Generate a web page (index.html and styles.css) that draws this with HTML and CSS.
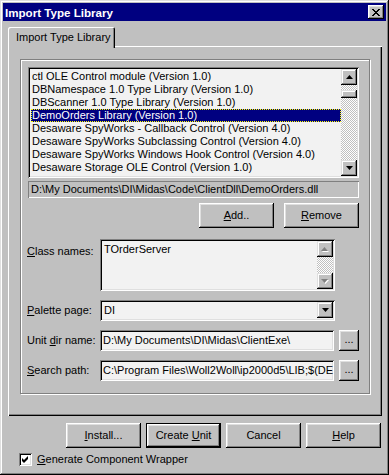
FILE: index.html
```html
<!DOCTYPE html>
<html lang="en">
<head>
    <meta charset="UTF-8">
    <title>Import Type Library</title>
    <link rel="stylesheet" href="styles.css">
</head>
<body>
    <div class="window">
        <div class="titlebar">
            <span class="title">Import Type Library</span>
            <div class="close-btn">
                <svg width="8" height="7" viewBox="0 0 8 7"><path d="M0 0h2v1h-2zM1 1h2v1h-2zM2 2h4v1h-4zM3 3h2v1h-2zM2 4h4v1h-4zM1 5h2v1h-2zM0 6h2v1h-2zM6 0h2v1h-2zM5 1h2v1h-2zM5 5h2v1h-2zM6 6h2v1h-2z" fill="#000"/></svg>
            </div>
        </div>

        <div class="tabstrip">
            <div class="tab">Import Type Library</div>
        </div>

        <div class="panel">
            <div class="group">
                <div class="listbox">
                    <div class="list-items">
                        <div class="item">ctl OLE Control module (Version 1.0)</div>
                        <div class="item">DBNamespace 1.0 Type Library (Version 1.0)</div>
                        <div class="item">DBScanner 1.0 Type Library (Version 1.0)</div>
                        <div class="item selected">DemoOrders Library (Version 1.0)</div>
                        <div class="item">Desaware SpyWorks - Callback Control (Version 4.0)</div>
                        <div class="item">Desaware SpyWorks Subclassing Control (Version 4.0)</div>
                        <div class="item">Desaware SpyWorks Windows Hook Control (Version 4.0)</div>
                        <div class="item">Desaware Storage OLE Control (Version 1.0)</div>
                        <div class="item">DCPOLE Dialogs Library (Version 1.0)</div>
                    </div>
                    <div class="vscroll">
                        <div class="sbtn"><svg width="7" height="4"><polygon points="3.5,0 7,4 0,4" fill="#000"/></svg></div>
                        <div class="track">
                            <div class="thumb"></div>
                        </div>
                        <div class="sbtn"><svg width="7" height="4"><polygon points="0,0 7,0 3.5,4" fill="#000"/></svg></div>
                    </div>
                </div>

                <div class="pathbox">D:\My Documents\DI\Midas\Code\ClientDll\DemoOrders.dll</div>

                <div class="btn-row">
                    <div class="button"><span><u>A</u>dd..</span></div>
                    <div class="button"><span><u>R</u>emove</span></div>
                </div>

                <div class="form">
                    <div class="label top"><span><u>C</u>lass names:</span></div>
                    <div class="memo">
                        <div class="memo-text">TOrderServer</div>
                        <div class="vscroll disabled">
                            <div class="sbtn"><svg width="8" height="5"><polygon points="4,1 8,5 1,5" fill="#fff"/><polygon points="3.5,0 7,4 0,4" fill="#808080"/></svg></div>
                            <div class="track"></div>
                            <div class="sbtn"><svg width="8" height="5"><polygon points="1,1 8,1 4.5,5" fill="#fff"/><polygon points="0,0 7,0 3.5,4" fill="#808080"/></svg></div>
                        </div>
                    </div>

                    <div class="label"><span><u>P</u>alette page:</span></div>
                    <div class="combo">
                        <div class="combo-text">DI</div>
                        <div class="sbtn"><svg width="7" height="4"><polygon points="0,0 7,0 3.5,4" fill="#000"/></svg></div>
                    </div>

                    <div class="label"><span>Unit <u>d</u>ir name:</span></div>
                    <div class="field-row">
                        <div class="edit">D:\My Documents\DI\Midas\ClientExe\</div>
                        <div class="button small">...</div>
                    </div>

                    <div class="label"><span><u>S</u>earch path:</span></div>
                    <div class="field-row">
                        <div class="edit">C:\Program Files\Woll2Woll\ip2000d5\LIB;$(DE</div>
                        <div class="button small">...</div>
                    </div>
                </div>
            </div>
        </div>

        <div class="footer">
            <div class="button"><span><u>I</u>nstall...</span></div>
            <div class="button default"><span>Create <u>U</u>nit</span></div>
            <div class="button"><span>Cancel</span></div>
            <div class="button"><span><u>H</u>elp</span></div>
        </div>

        <div class="check-row">
            <div class="checkbox">
                <svg width="7" height="7" viewBox="0 0 7 7"><path d="M6 0v3l-4 4-2-2v-3l2 2z" fill="#000"/></svg>
            </div>
            <span><u>G</u>enerate Component Wrapper</span>
        </div>
    </div>
</body>
</html>
```

FILE: styles.css
```css
* {
    box-sizing: border-box;
}
body {
    margin: 0;
    background: #c0c0c0;
    font-family: "Liberation Sans", Arial, sans-serif;
    font-size: 11px;
    line-height: 13px;
    color: #000;
}
u {
    text-decoration: underline;
    text-underline-offset: 1px;
}
.window {
    width: 389px;
    height: 475px;
    padding: 3px;
    background: #c0c0c0;
    box-shadow: inset -1px -1px #000, inset 1px 1px #dfdfdf, inset -2px -2px #808080, inset 2px 2px #fff;
    display: flex;
    flex-direction: column;
}
.titlebar {
    height: 18px;
    background: #000080;
    color: #fff;
    display: flex;
    align-items: center;
    justify-content: space-between;
    padding: 0 2px 0 2px;
}
.title {
    font-weight: bold;
    font-size: 11.6px;
}
.close-btn {
    width: 16px;
    height: 14px;
    background: #c0c0c0;
    display: flex;
    align-items: center;
    justify-content: center;
    padding-right: 1px;
    box-shadow: inset -1px -1px #000, inset 1px 1px #fff, inset -2px -2px #808080, inset 2px 2px #dfdfdf;
}

/* tab */
.tabstrip {
    margin: 6px 0 0 5px;
    display: flex;
}
.tab {
    position: relative;
    z-index: 1;
    width: 107px;
    height: 21px;
    margin-bottom: -2px;
    padding: 4px 0 0 8px;
    background: #c0c0c0;
    border-radius: 2px 2px 0 0;
    box-shadow: inset 1px 1px #fff, inset -1px 0 #000, inset -2px 0 #808080;
}
.panel {
    margin-left: 5px;
    width: 374px;
    height: 370px;
    padding: 13px 12px 0 12px;
    box-shadow: inset 1px 1px #fff, inset -1px -1px #000, inset -2px -2px #808080;
}
.group {
    width: 350px;
    height: 335px;
    border: 1px solid #808080;
    box-shadow: inset 1px 1px #fff, 1px 1px #fff;
    padding: 7px 10px 0 7px;
}

/* sunken controls */
.listbox, .memo, .combo, .edit {
    background: #f2f2f2;
    box-shadow: inset 1px 1px #808080, inset -1px -1px #fff, inset 2px 2px #000, inset -2px -2px #dfdfdf;
    padding: 2px;
}
.listbox {
    height: 111px;
    display: flex;
    overflow: hidden;
}
.list-items {
    flex: 1;
    padding: 1px 0 0 1px;
    overflow: hidden;
    white-space: nowrap;
}
.item {
    height: 13px;
    padding-left: 1px;
}
.item.selected {
    background: #000080;
    color: #fff;
    outline: 1px dotted #ffff00;
    outline-offset: -1px;
}
.vscroll {
    width: 16px;
    display: flex;
    flex-direction: column;
}
.sbtn {
    width: 16px;
    height: 16px;
    flex-shrink: 0;
    background: #c0c0c0;
    display: flex;
    align-items: center;
    justify-content: center;
    box-shadow: inset -1px -1px #000, inset 1px 1px #dfdfdf, inset -2px -2px #808080, inset 2px 2px #fff;
}
.track {
    flex: 1;
    background-image: repeating-conic-gradient(#fff 0 25%, #c0c0c0 0 50%);
    background-size: 2px 2px;
    padding-top: 5px;
}
.thumb {
    height: 8px;
    background: #c0c0c0;
    box-shadow: inset -1px -1px #000, inset 1px 1px #dfdfdf, inset -2px -2px #808080, inset 2px 2px #fff;
}
.pathbox {
    margin-top: 3px;
    height: 17px;
    padding: 2px 3px;
    box-shadow: inset 1px 1px #808080, inset -1px -1px #fff;
    white-space: nowrap;
    overflow: hidden;
}
.btn-row {
    margin-top: 5px;
    display: flex;
    justify-content: flex-end;
    gap: 10px;
}
.button {
    width: 75px;
    height: 25px;
    background: #c0c0c0;
    display: flex;
    align-items: center;
    justify-content: center;
    box-shadow: inset -1px -1px #000, inset 1px 1px #fff, inset -2px -2px #808080, inset 2px 2px #dfdfdf;
}
.button.default {
    box-shadow: inset 0 0 0 1px #000, inset -2px -2px #000, inset 2px 2px #fff, inset -3px -3px #808080, inset 3px 3px #dfdfdf;
}

/* form */
.form {
    margin-top: 11px;
    display: grid;
    grid-template-columns: 73px 259px;
    grid-template-rows: 52px 21px 21px 21px;
    row-gap: 9px;
    margin-left: -1px;
}
.label {
    display: flex;
    align-items: center;
}
.label.top {
    align-items: flex-start;
    padding-top: 6px;
}
.memo {
    width: 235px;
    display: flex;
}
.memo-text {
    flex: 1;
    padding: 2px 0 0 2px;
}
.combo {
    width: 235px;
    display: flex;
}
.combo-text {
    flex: 1;
    padding: 2px 0 0 2px;
}
.field-row {
    display: flex;
    gap: 5px;
}
.edit {
    width: 234px;
    padding: 4px 2px 0 3px;
    white-space: nowrap;
    overflow: hidden;
}
.button.small {
    width: 20px;
    height: 21px;
    padding-bottom: 2px;
}

/* bottom */
.footer {
    margin-top: 7px;
    display: flex;
    justify-content: flex-end;
    gap: 5px;
    padding-right: 5px;
}
.check-row {
    margin: 5px 0 0 16px;
    display: flex;
    align-items: center;
    gap: 5px;
}
.checkbox {
    width: 13px;
    height: 13px;
    background: #fff;
    display: flex;
    align-items: center;
    justify-content: center;
    box-shadow: inset 1px 1px #808080, inset -1px -1px #fff, inset 2px 2px #000, inset -2px -2px #dfdfdf;
}
```
